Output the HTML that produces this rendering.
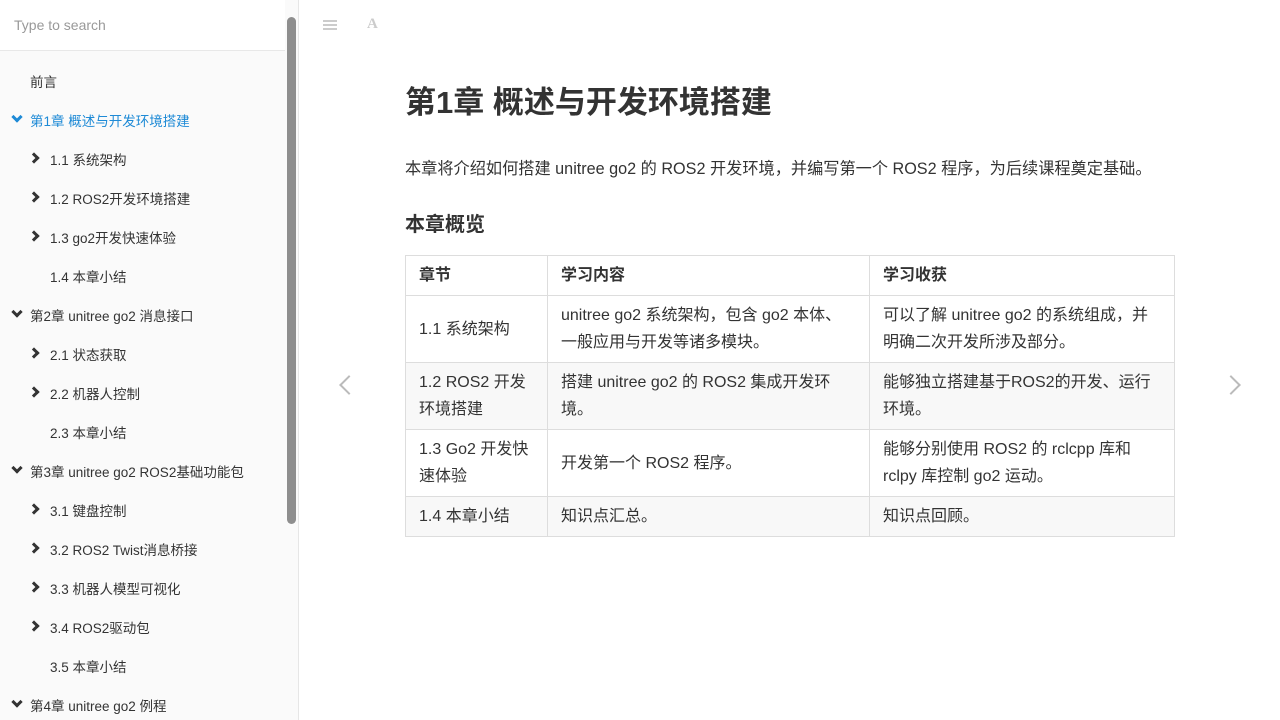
<!DOCTYPE html>
<html><head><meta charset="utf-8"><style>
*{margin:0;padding:0;box-sizing:border-box}
body{width:1280px;height:720px;overflow:hidden;background:#fff;font-family:"Liberation Sans","Noto Sans CJK SC",sans-serif;position:relative}
.sb{position:absolute;left:0;top:0;width:299px;height:720px;background:#fafafa;border-right:1px solid #e6e6e6}
.search{height:51px;background:#fff;border-bottom:1px solid #e8e8e8;padding:17px 14px;font-size:14px;color:#999;width:285px}
.it{position:absolute;font-size:13.5px;color:#333;white-space:nowrap}
.it.a{color:#1e8ad6}
.ch{position:absolute;width:8px;height:8px;border-right:3px solid #333;border-bottom:3px solid #333}
.dn{transform:rotate(45deg)}
.rt{transform:rotate(-45deg)}
.scroll{position:absolute;left:287px;top:17px;width:9px;height:507px;background:#8e8e8e;border-radius:5px}
h1{position:absolute;left:405px;top:77px;font-size:31px;font-weight:bold;color:#333;white-space:nowrap}
p.i{position:absolute;left:405px;top:155px;font-size:16.2px;color:#333;white-space:nowrap}
h2{position:absolute;left:405px;top:208px;font-size:20px;font-weight:bold;color:#333}
table{position:absolute;left:405px;top:255px;border-collapse:collapse;font-size:16px;color:#333;table-layout:fixed;width:769px}
td,th{border:1px solid #ddd;padding:6px 13px;text-align:left;vertical-align:middle;line-height:27px}
th{height:40px}
tr.g td{background:#f8f8f8}
.arr{position:absolute;width:14px;height:14px;border-left:2px solid #bbb;border-bottom:2px solid #bbb}
</style></head><body>
<div class="sb">
<div class="search">Type to search</div>
<div class="it" style="left:30px;top:71px">前言</div>
<div class="ch dn" style="left:13px;top:113px;border-color:#1e8ad6"></div><div class="it a" style="left:30px;top:110px">第1章 概述与开发环境搭建</div>
<div class="ch rt" style="left:30px;top:154px"></div><div class="it" style="left:50px;top:149px">1.1 系统架构</div>
<div class="ch rt" style="left:30px;top:193px"></div><div class="it" style="left:50px;top:188px">1.2 ROS2开发环境搭建</div>
<div class="ch rt" style="left:30px;top:232px"></div><div class="it" style="left:50px;top:227px">1.3 go2开发快速体验</div>
<div class="it" style="left:50px;top:266px">1.4 本章小结</div>
<div class="ch dn" style="left:13px;top:308px"></div><div class="it" style="left:30px;top:305px">第2章 unitree go2 消息接口</div>
<div class="ch rt" style="left:30px;top:349px"></div><div class="it" style="left:50px;top:344px">2.1 状态获取</div>
<div class="ch rt" style="left:30px;top:388px"></div><div class="it" style="left:50px;top:383px">2.2 机器人控制</div>
<div class="it" style="left:50px;top:422px">2.3 本章小结</div>
<div class="ch dn" style="left:13px;top:464px"></div><div class="it" style="left:30px;top:461px">第3章 unitree go2 ROS2基础功能包</div>
<div class="ch rt" style="left:30px;top:505px"></div><div class="it" style="left:50px;top:500px">3.1 键盘控制</div>
<div class="ch rt" style="left:30px;top:544px"></div><div class="it" style="left:50px;top:539px">3.2 ROS2 Twist消息桥接</div>
<div class="ch rt" style="left:30px;top:583px"></div><div class="it" style="left:50px;top:578px">3.3 机器人模型可视化</div>
<div class="ch rt" style="left:30px;top:622px"></div><div class="it" style="left:50px;top:617px">3.4 ROS2驱动包</div>
<div class="it" style="left:50px;top:656px">3.5 本章小结</div>
<div class="ch dn" style="left:13px;top:698px"></div><div class="it" style="left:30px;top:695px">第4章 unitree go2 例程</div>
<div class="scroll"></div>
</div>
<div style="position:absolute;left:323px;top:20px;width:14px;height:10px;border-top:2px solid #ccc;border-bottom:2px solid #ccc"><div style="margin-top:2px;border-top:2px solid #ccc"></div></div>
<div style="position:absolute;left:367px;top:16px;font:bold 15px 'Liberation Serif',serif;color:#ccc">A</div>
<h1>第1章 概述与开发环境搭建</h1>
<p class="i">本章将介绍如何搭建 unitree go2 的 ROS2 开发环境，并编写第一个 ROS2 程序，为后续课程奠定基础。</p>
<h2>本章概览</h2>
<table>
<colgroup><col style="width:142px"><col style="width:322px"><col style="width:305px"></colgroup>
<tr><th>章节</th><th>学习内容</th><th>学习收获</th></tr>
<tr><td>1.1 系统架构</td><td>unitree go2 系统架构，包含 go2 本体、一般应用与开发等诸多模块。</td><td>可以了解 unitree go2 的系统组成，并明确二次开发所涉及部分。</td></tr>
<tr class="g"><td>1.2 ROS2 开发环境搭建</td><td>搭建 unitree go2 的 ROS2 集成开发环境。</td><td>能够独立搭建基于ROS2的开发、运行环境。</td></tr>
<tr><td>1.3 Go2 开发快速体验</td><td>开发第一个 ROS2 程序。</td><td>能够分别使用 ROS2 的 rclcpp 库和 rclpy 库控制 go2 运动。</td></tr>
<tr class="g"><td>1.4 本章小结</td><td>知识点汇总。</td><td>知识点回顾。</td></tr>
</table>
<div class="arr" style="left:342px;top:378px;transform:rotate(45deg)"></div>
<div class="arr" style="left:1224px;top:378px;transform:rotate(-135deg)"></div>
</body></html>
